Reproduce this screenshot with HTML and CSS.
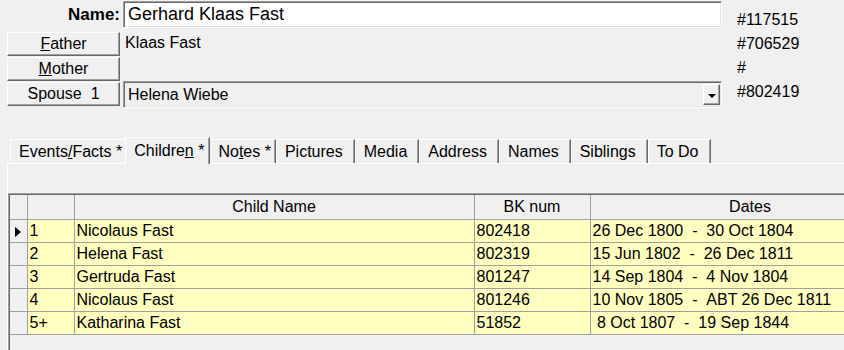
FILE: index.html
```html
<!DOCTYPE html>
<html lang="en">
<head>
  <meta charset="UTF-8">
  <title>Person</title>
  <link rel="stylesheet" href="styles.css">
</head>
<body>
  <div class="head">
    <div class="fields">
      <div class="row name-row">
        <label class="name-label">Name:</label>
        <div class="edit">Gerhard Klaas Fast</div>
      </div>
      <div class="row first-btn">
        <button class="btn"><u>F</u>ather</button>
        <span class="plain">Klaas Fast</span>
      </div>
      <div class="row">
        <button class="btn"><u>M</u>other</button>
        <span class="plain"></span>
      </div>
      <div class="row">
        <button class="btn">Spouse&nbsp;&nbsp;1</button>
        <div class="combo">
          <span>Helena Wiebe</span>
          <span class="drop"><span class="arrow"></span></span>
        </div>
      </div>
    </div>
    <div class="ids">
      <div>#117515</div>
      <div>#706529</div>
      <div>#</div>
      <div>#802419</div>
    </div>
  </div>

  <div class="tabs">
    <div class="tab star">Events<u>/</u>Facts *</div>
    <div class="tab active">Childre<u>n</u> *</div>
    <div class="tab star">No<u>t</u>es *</div>
    <div class="tab">Pictures</div>
    <div class="tab">Media</div>
    <div class="tab">Address</div>
    <div class="tab">Names</div>
    <div class="tab">Siblings</div>
    <div class="tab">To Do</div>
  </div>

  <div class="panel">
    <div class="grid">
      <table class="table">
        <colgroup>
          <col class="c-ind">
          <col class="c-num">
          <col class="c-name">
          <col class="c-bk">
          <col class="c-dates">
        </colgroup>
        <thead>
          <tr>
            <th class="ind"></th>
            <th></th>
            <th>Child Name</th>
            <th>BK num</th>
            <th>Dates</th>
          </tr>
        </thead>
        <tbody>
          <tr>
            <td class="ind"><span class="pointer"></span></td>
            <td>1</td>
            <td>Nicolaus Fast</td>
            <td>802418</td>
            <td>26 Dec 1800&nbsp; - &nbsp;30 Oct 1804</td>
          </tr>
          <tr>
            <td class="ind"></td>
            <td>2</td>
            <td>Helena Fast</td>
            <td>802319</td>
            <td>15 Jun 1802&nbsp; - &nbsp;26 Dec 1811</td>
          </tr>
          <tr>
            <td class="ind"></td>
            <td>3</td>
            <td>Gertruda Fast</td>
            <td>801247</td>
            <td>14 Sep 1804&nbsp; - &nbsp;4 Nov 1804</td>
          </tr>
          <tr>
            <td class="ind"></td>
            <td>4</td>
            <td>Nicolaus Fast</td>
            <td>801246</td>
            <td>10 Nov 1805&nbsp; - &nbsp;ABT 26 Dec 1811</td>
          </tr>
          <tr>
            <td class="ind"></td>
            <td>5+</td>
            <td>Katharina Fast</td>
            <td>51852</td>
            <td>&nbsp;8 Oct 1807&nbsp; - &nbsp;19 Sep 1844</td>
          </tr>
        </tbody>
      </table>
    </div>
  </div>
</body>
</html>
```

FILE: styles.css
```css
html, body {
  margin: 0;
  height: 100%;
  overflow: hidden;
}

body {
  background: #f0f0f0;
  font-family: "Liberation Sans", Arial, sans-serif;
  font-size: 16px;
  color: #000;
  padding-left: 7px;
  box-sizing: border-box;
}

.head {
  display: flex;
  align-items: flex-start;
}

.fields {
  width: 715px;
  padding-top: 1px;
}

.row {
  display: flex;
  height: 24px;
  margin-top: 1px;
}

.name-row {
  height: 27px;
  margin-top: 0;
}

.first-btn {
  margin-top: 4px;
}

.name-label {
  width: 113px;
  text-align: right;
  font-weight: bold;
  font-size: 17px;
  line-height: 27px;
}

.edit {
  margin-left: 3px;
  flex: 1;
  background: #fff;
  border: 1px solid;
  border-color: #a0a0a0 #fff #fff #a0a0a0;
  box-shadow: inset 1px 1px #696969, inset -1px -1px #e3e3e3;
  font-size: 18px;
  line-height: 25px;
  padding-left: 4px;
}

.btn {
  width: 113px;
  height: 24px;
  padding: 0;
  background: #f0f0f0;
  border: 1px solid;
  border-color: #fff #696969 #696969 #fff;
  box-shadow: inset -1px -1px #a0a0a0;
  font-family: inherit;
  font-size: 16px;
  color: #000;
  cursor: pointer;
}

.plain {
  margin-left: 5px;
  line-height: 21px;
}

.combo {
  margin-left: 3px;
  margin-top: -1px;
  flex: 1;
  height: 27px;
  box-sizing: border-box;
  display: flex;
  align-items: center;
  justify-content: space-between;
  border: 1px solid;
  border-color: #a0a0a0 #fff #fff #a0a0a0;
  box-shadow: inset 1px 1px #696969, inset -1px -1px #e3e3e3;
  padding: 2px 1px 2px 4px;
}

.drop {
  width: 17px;
  height: 21px;
  box-sizing: border-box;
  border: 1px solid;
  border-color: #fff #696969 #696969 #fff;
  box-shadow: inset -1px -1px #a0a0a0;
  display: flex;
  align-items: center;
  justify-content: center;
}

.arrow {
  width: 0;
  height: 0;
  border-left: 4px solid transparent;
  border-right: 4px solid transparent;
  border-top: 4px solid #000;
  margin-top: 3px;
}

.ids {
  margin-left: 15px;
  padding-top: 8px;
  line-height: 24px;
}

.tabs {
  display: flex;
  align-items: flex-end;
  height: 26px;
  margin-top: 31px;
  padding-left: 3px;
}

.tab {
  height: 24px;
  box-sizing: border-box;
  padding: 0 11px 0 8px;
  line-height: 23px;
  border-top: 1px solid #fff;
  border-left: 1px solid #fff;
  border-right: 1px solid #696969;
  box-shadow: inset -1px 0 #a0a0a0;
  white-space: nowrap;
}

.tab.star {
  padding-right: 4px;
}

.tab.active {
  height: 27px;
  margin: 0 -1px -1px -2px;
  padding: 0 5px 0 8px;
  background: #f0f0f0;
  position: relative;
  line-height: 25px;
}

.panel {
  border-top: 1px solid #fff;
  border-left: 1px solid #fff;
  padding-top: 29px;
}

.grid {
  height: 156px;
  overflow: hidden;
  border-top: 1px solid #a0a0a0;
  border-left: 1px solid #a0a0a0;
  box-shadow: inset 1px 1px #696969;
  padding: 1px 0 0 1px;
}

.table {
  border-collapse: collapse;
  table-layout: fixed;
  width: 900px;
}

.c-ind { width: 17px; }
.c-num { width: 47px; }
.c-name { width: 400px; }
.c-bk { width: 116px; }
.c-dates { width: 320px; }

.table th {
  height: 24px;
  padding: 0;
  font-weight: normal;
  text-align: center;
  background: #f0f0f0;
  border-right: 1px solid #a0a0a0;
  border-bottom: 1px solid #a0a0a0;
}

.table td {
  height: 22px;
  padding: 0 0 0 2px;
  background: #ffffc0;
  border-right: 1px solid #a0a0a0;
  border-bottom: 1px solid #a0a0a0;
  white-space: nowrap;
}

.table td.ind {
  background: #f0f0f0;
  padding: 0;
  text-align: center;
}

.pointer {
  display: inline-block;
  width: 0;
  height: 0;
  border-top: 5px solid transparent;
  border-bottom: 5px solid transparent;
  border-left: 6px solid #000;
  vertical-align: middle;
}
```
